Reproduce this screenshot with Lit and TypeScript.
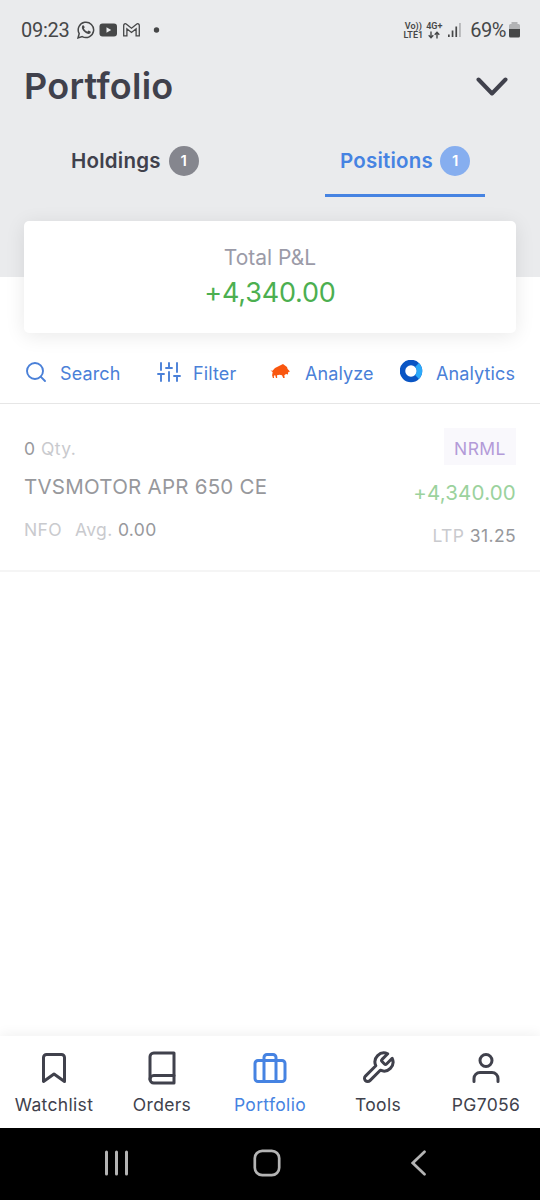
import { LitElement, html, svg, css } from "lit";
import { customElement, property } from "lit/decorators.js";

const icons = {
  bookmark: svg`<path d="M19 21l-7-5-7 5V5a2 2 0 0 1 2-2h10a2 2 0 0 1 2 2z"/>`,
  book: svg`<path d="M4 19.5A2.5 2.5 0 0 1 6.5 17H20"/><path d="M6.5 2H20v20H6.5A2.5 2.5 0 0 1 4 19.5v-15A2.5 2.5 0 0 1 6.5 2z"/>`,
  briefcase: svg`<rect x="2" y="7" width="20" height="14" rx="2"/><path d="M16 21V5a2 2 0 0 0-2-2h-4a2 2 0 0 0-2 2v16"/>`,
  tool: svg`<path d="M14.7 6.3a1 1 0 0 0 0 1.4l1.6 1.6a1 1 0 0 0 1.4 0l3.77-3.77a6 6 0 0 1-7.94 7.94l-6.91 6.91a2.12 2.12 0 0 1-3-3l6.91-6.91a6 6 0 0 1 7.94-7.94l-3.76 3.76z"/>`,
  user: svg`<path d="M20 21v-2a4 4 0 0 0-4-4H8a4 4 0 0 0-4 4v2"/><circle cx="12" cy="7" r="4"/>`,
  search: svg`<circle cx="11" cy="11" r="8"/><path d="M21 21l-4.35-4.35"/>`,
  sliders: svg`<path d="M4 21v-7M4 10V3M12 21v-9M12 8V3M20 21v-5M20 12V3M1 14h6M9 8h6M17 16h6"/>`,
};

@customElement("nav-item")
class NavItem extends LitElement {
  @property() label = "";
  @property() icon: keyof typeof icons = "bookmark";
  @property({ type: Boolean }) active = false;

  static styles = css`
    :host { flex: 1; display: flex; flex-direction: column; align-items: center; padding-top: 14px; color: #40414c; }
    :host([active]) { color: #4683e2; }
    .icon { width: 36px; height: 36px; fill: none; stroke: currentColor; stroke-width: 2; stroke-linecap: round; stroke-linejoin: round; }
    .label { font-size: 17.5px; line-height: 22px; margin-top: 8px; letter-spacing: 0.32px; white-space: nowrap; }
  `;

  render() {
    return html`<svg class="icon" viewBox="0 0 24 24">${icons[this.icon]}</svg><span class="label">${this.label}</span>`;
  }
}

@customElement("app-root")
class AppRoot extends LitElement {
  static styles = css`
    * { box-sizing: border-box; }
    :host { display: flex; flex-direction: column; width: 540px; height: 1200px; background: #fff; color: #40414c; font-family: Inter, "Liberation Sans", sans-serif; overflow: hidden; }
    svg { display: block; flex: none; }
    .header { height: 277px; background: #eaebed; flex: none; }
    .status { display: flex; align-items: center; height: 60px; padding: 0 20px 0 21px; color: #464748; font-family: Roboto, sans-serif; font-size: 20px; }
    .clock { width: 56px; letter-spacing: -0.25px; }
    .grow { flex: 1; }
    .stack { display: flex; flex-direction: column; align-items: center; gap: 1px; font-size: 9px; line-height: 8px; font-weight: 600; padding-top: 1px; }
    .volte { margin-right: 3px; }
    .net { margin-right: 6px; }
    .pct { letter-spacing: -0.5px; margin: 0 3px 0 9px; }
    .title { display: flex; align-items: center; justify-content: space-between; height: 52px; padding: 0 32px 0 24px; }
    .name { font-size: 36px; font-weight: 600; line-height: 42px; letter-spacing: 0.25px; margin-top: -1px; }
    .tabs { display: flex; height: 85px; padding: 27px 55px 0 56px; justify-content: space-between; }
    .tab { display: flex; align-items: flex-start; height: 58px; padding: 7px 15px 0; font-size: 20.5px; font-weight: 600; line-height: 30px; width: 160px; gap: 8px; letter-spacing: 0.22px; }
    .tab.on { color: #4683e2; border-bottom: 3px solid #4683e2; }
    .badge { width: 30px; height: 30px; border-radius: 50%; background: #85868e; color: #fff; font-size: 15px; text-align: center; letter-spacing: 0; flex: none; }
    .on .badge { background: #86aeef; }
    .on { gap: 7px; }
    .card { position: relative; margin: -56px 24px 0; height: 112px; border-radius: 5px; background: #fff; box-shadow: 0 3px 20px rgba(0,0,0,.09); display: flex; flex-direction: column; align-items: center; padding-top: 23px; flex: none; }
    .total { font-size: 21px; line-height: 28px; color: #9b9ba8; }
    .pnl { font-size: 27px; line-height: 36px; margin-top: 3px; color: #4caf50; letter-spacing: -0.2px; }
    .tools { display: grid; grid-template-columns: 133px 112px 131px auto; align-items: center; height: 71px; padding: 8px 0 0 24px; border-bottom: 1px solid #e6e6e6; color: #4a80d8; font-size: 18px; flex: none; }
    .tool { display: flex; align-items: center; gap: 12px; line-height: 24px; letter-spacing: 0.12px; white-space: nowrap; }
    .caption { padding-top: 3px; margin-bottom: -1px; }
    .line { width: 24px; height: 24px; fill: none; stroke: currentColor; stroke-width: 1.9; stroke-linecap: round; stroke-linejoin: round; }
    .position { display: flex; justify-content: space-between; height: 168px; padding: 24px 24px 0; border-bottom: 2px solid #f5f5f5; color: #97989c; font-size: 17.5px; flex: none; }
    .left, .right { display: flex; flex-direction: column; }
    .right { align-items: flex-end; }
    .muted { color: #c9cace; }
    .qty { line-height: 24px; margin-top: 9px; letter-spacing: 0.45px; }
    .symbol { font-size: 20.5px; line-height: 28px; margin-top: 12px; letter-spacing: 0.24px; }
    .avg { line-height: 24px; margin-top: 17px; letter-spacing: 0.36px; }
    .exchange { margin-right: 13px; }
    .product { width: 72px; height: 37px; line-height: 41px; background: #f9f8fc; color: #b39bd8; text-align: center; letter-spacing: 0.4px; }
    .gain { font-size: 20.5px; line-height: 28px; margin-top: 14px; color: #9bd29d; letter-spacing: 0.2px; }
    .ltp { line-height: 24px; margin-top: 17px; letter-spacing: 0.4px; }
    .nav { display: flex; height: 92px; margin-top: auto; box-shadow: 0 -2px 12px rgba(0,0,0,.06); flex: none; }
    .system { height: 72px; background: #000; display: flex; align-items: center; padding: 0 113px 2px 104px; justify-content: space-between; flex: none; }
    .home { margin-right: 7px; }
  `;

  render() {
    return html`
      <div class="header">
        <div class="status">
          <span class="clock">09:23</span>
          <svg width="86" height="20" viewBox="77 20.5 86 20" fill="none" stroke="#464748">
            <path d="M78 38.5l1.200-4.400a7.700 7.700 0 1 1 3 3z" stroke-width="1.5"/>
            <path d="M82.300 26.200c.7-.8 1.500-.5 1.800.3l.6 1.300-.8 1.300c.8 1.600 2 2.500 3.400 3.100l1.200-1.100 2 1c.5.300.2 1.500-.5 2-2.600 1.700-8.600-3.200-8.100-6.600z" fill="#464748" stroke="none"/>
            <rect x="99.500" y="24" width="17.500" height="13" rx="3" fill="#464748" stroke="none"/>
            <path d="M106.500 27.700v5.600l4.700-2.800z" fill="#eaebed" stroke="none"/>
            <path d="M123.700 36.300V26c0-1.700 1.600-2.300 2.800-1.300l5 4 5-4c1.200-1 2.800-.4 2.800 1.300v10.300h-3.200v-7l-4.600 3.700-4.600-3.700v7z" stroke-width="1.3"/>
            <circle cx="156.500" cy="30.500" r="2.700" fill="#464748" stroke="none"/>
          </svg>
          <span class="grow"></span>
          <span class="stack volte"><span>Vo))</span><span>LTE1</span></span>
          <span class="stack net"><span>4G+</span>
            <svg width="12" height="8" viewBox="0 0 12 8" fill="none" stroke="#464748" stroke-width="1.400"><path d="M3 .5v6M.7 4.300L3 6.800l2.300-2.500M9 7.500v-6M6.700 3.700L9 1.200l2.300 2.500"/></svg>
          </span>
          <svg width="13" height="16" viewBox="0 0 13 16"><g fill="#464748"><rect x="0" y="12.500" width="1.700" height="2.500"/><rect x="3.700" y="8.500" width="1.700" height="6.500"/><rect x="7.400" y="4.500" width="1.700" height="10.500"/></g><rect x="11.100" y="1" width="1.700" height="14" fill="#b2b3b5"/></svg>
          <span class="pct">69%</span>
          <svg width="11" height="16" viewBox="0 0 11 16"><path d="M2.500 0h6v2H9.500q1.500 0 1.500 1.500V8H0V3.500Q0 2 1.500 2h1z" fill="#b2b3b5"/><path d="M0 7h11v7q0 1.500-1.500 1.500h-8Q0 15.500 0 14z" fill="#464748"/></svg>
        </div>
        <div class="title">
          <span class="name">Portfolio</span>
          <svg width="32" height="20" viewBox="0 0 32 20" fill="none" stroke="#40414c" stroke-width="4" stroke-linecap="round" stroke-linejoin="round"><path d="M2.500 3.500L16 17.500 29.500 3.500"/></svg>
        </div>
        <div class="tabs">
          <div class="tab"><span>Holdings</span><span class="badge">1</span></div>
          <div class="tab on"><span>Positions</span><span class="badge">1</span></div>
        </div>
      </div>
      <div class="card"><span class="total">Total P&amp;L</span><span class="pnl">+4,340.00</span></div>
      <div class="tools">
        <div class="tool"><svg class="line" viewBox="0 0 24 24">${icons.search}</svg><span class="caption">Search</span></div>
        <div class="tool"><svg class="line" viewBox="0 0 24 24">${icons.sliders}</svg><span class="caption">Filter</span></div>
        <div class="tool"><svg width="24" height="24" viewBox="0 0 24 24" fill="#f9560e"><path d="M1.500 10.500l2 .2L6 8l5-2.500L14 4l4 3 .6 2 2.400 2.500-1.700.5-.4 2.500-1.900-.6-1.700 1.400.4 2.700h-1.500l-1.200-2.700-2.500-.5-2.500.5.200 2.700H7l-.9-3.100-1.300 1 .3 2.100H3.900l-.8-2.700.6-3.300z"/></svg><span class="caption">Analyze</span></div>
        <div class="tool"><svg width="24" height="24" viewBox="0 0 24 24" fill="none" stroke-width="5.500"><circle cx="11" cy="11" r="8.500" stroke="#0a55c4"/><path d="M17 5a8.500 8.500 0 0 1 0 12" stroke="#2ba9fa"/></svg><span class="caption">Analytics</span></div>
      </div>
      <div class="position">
        <div class="left">
          <div class="qty">0 <span class="muted">Qty.</span></div>
          <div class="symbol">TVSMOTOR APR 650 CE</div>
          <div class="avg"><span class="muted exchange">NFO</span><span class="muted">Avg. </span> 0.00</div>
        </div>
        <div class="right">
          <div class="product">NRML</div>
          <div class="gain">+4,340.00</div>
          <div class="ltp"><span class="muted">LTP</span> 31.25</div>
        </div>
      </div>
      <div class="nav">
        <nav-item icon="bookmark" label="Watchlist"></nav-item>
        <nav-item icon="book" label="Orders"></nav-item>
        <nav-item icon="briefcase" label="Portfolio" active></nav-item>
        <nav-item icon="tool" label="Tools"></nav-item>
        <nav-item icon="user" label="PG7056"></nav-item>
      </div>
      <div class="system">
        <svg width="25" height="26" viewBox="0 0 25 26" stroke="#b4b4b4" stroke-width="3" stroke-linecap="round"><path d="M2.500 2v22M12.500 2v22M22.500 2v22"/></svg>
        <svg class="home" width="28" height="28" viewBox="0 0 28 28" fill="none" stroke="#b4b4b4" stroke-width="2.700"><rect x="1.800" y="1.800" width="24.400" height="24.400" rx="7.500"/></svg>
        <svg width="16" height="26" viewBox="0 0 16 26" fill="none" stroke="#b4b4b4" stroke-width="2.700" stroke-linecap="round"><path d="M13.500 1.800L1.800 13l11.700 11.200"/></svg>
      </div>
    `;
  }
}
